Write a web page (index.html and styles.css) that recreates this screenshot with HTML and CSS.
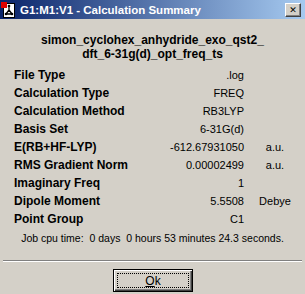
FILE: index.html
```html
<!DOCTYPE html>
<html lang="en">
<head>
  <meta charset="UTF-8" />
  <title>G1:M1:V1 - Calculation Summary</title>
  <link rel="stylesheet" href="styles.css">
</head>
<body>
  <div class="window">
    <!-- title bar -->
    <div class="titlebar">
      <svg class="app-icon" width="16" height="16" viewBox="0 0 16 16">
        <rect x="2.5" y="1.5" width="11" height="14" fill="#fff" stroke="#000"/>
        <rect x="0" y="0" width="6" height="6" fill="#e00000"/>
        <path d="M8 4 L8 8 L5 12 M8 8 L11 12 M5 12 L11 12" stroke="#000" stroke-width="1.3" fill="none"/>
        <circle cx="8" cy="4" r="1.3" fill="#000"/>
        <circle cx="5" cy="12" r="1.3" fill="#000"/>
        <circle cx="11" cy="12" r="1.3" fill="#000"/>
      </svg>
      <span class="title">G1:M1:V1 - Calculation Summary</span>
      <button class="close-btn">&#x2715;</button>
    </div>

    <!-- file name -->
    <div class="filename">
      <div>simon_cyclohex_anhydride_exo_qst2_</div>
      <div>dft_6-31g(d)_opt_freq_ts</div>
    </div>

    <!-- summary rows -->
    <div class="summary">
      <span class="label">File Type</span><span class="value">.log</span><span class="unit"></span>
      <span class="label">Calculation Type</span><span class="value">FREQ</span><span class="unit"></span>
      <span class="label">Calculation Method</span><span class="value">RB3LYP</span><span class="unit"></span>
      <span class="label">Basis Set</span><span class="value">6-31G(d)</span><span class="unit"></span>
      <span class="label">E(RB+HF-LYP)</span><span class="value">-612.67931050</span><span class="unit">a.u.</span>
      <span class="label">RMS Gradient Norm</span><span class="value">0.00002499</span><span class="unit">a.u.</span>
      <span class="label">Imaginary Freq</span><span class="value">1</span><span class="unit"></span>
      <span class="label">Dipole Moment</span><span class="value">5.5508</span><span class="unit">Debye</span>
      <span class="label">Point Group</span><span class="value">C1</span><span class="unit"></span>
    </div>

    <div class="cputime">Job cpu time:&nbsp; 0 days&nbsp; 0 hours 53 minutes 24.3 seconds.</div>

    <div class="separator"></div>

    <div class="buttons">
      <button class="ok-btn"><span class="focus"><u>O</u>k</span></button>
    </div>
  </div>
</body>
</html>
```

FILE: styles.css
```css
* {
  margin: 0;
  padding: 0;
  box-sizing: border-box;
}

body {
  font-family: 'Liberation Sans', Arial, sans-serif;
  font-size: 11px;
  color: #000;
  background-color: #d4d0c8;
  width: 305px;
  height: 294px;
  overflow: hidden;
}

.window {
  display: flex;
  flex-direction: column;
}

/* title bar */
.titlebar {
  height: 19px;
  display: flex;
  align-items: center;
  padding: 0 4px 0 1px;
  background: linear-gradient(to right, #0a246a, #a6caf0);
  color: white;
}

.app-icon {
  flex: none;
  margin-right: 3px;
}

.title {
  flex: 1;
  font-weight: bold;
  font-size: 11.5px;
  white-space: nowrap;
}

.close-btn {
  width: 16px;
  height: 14px;
  background-color: #d4d0c8;
  border: 1px solid;
  border-color: #fff #404040 #404040 #fff;
  box-shadow: inset -1px -1px 0 #808080;
  font-family: 'DejaVu Sans', sans-serif;
  font-size: 9px;
  font-weight: bold;
  line-height: 12px;
  color: #000;
  text-align: center;
}

/* file name */
.filename {
  margin-top: 14px;
  text-align: center;
  font-weight: bold;
  font-size: 12px;
  line-height: 14px;
}

/* summary rows */
.summary {
  margin-top: 5px;
  padding: 0 3px 0 14px;
  display: grid;
  grid-template-columns: 1fr 100px 54px;
  column-gap: 4px;
  grid-auto-rows: 18px;
  align-items: center;
}

.label {
  font-weight: bold;
  font-size: 12px;
  white-space: nowrap;
}

.value {
  text-align: right;
  white-space: nowrap;
}

.unit {
  text-align: center;
}

.cputime {
  margin-top: 1px;
  text-align: center;
  line-height: 18px;
  font-size: 10.5px;
}

.separator {
  margin: 13px 3px 0 3px;
  height: 2px;
  border-top: 1px solid #808080;
  border-bottom: 1px solid #fff;
}

.buttons {
  display: flex;
  justify-content: center;
  padding-top: 7px;
}

.ok-btn {
  width: 80px;
  height: 23px;
  margin-left: 1px;
  background-color: #d4d0c8;
  border: 1px solid #000;
  box-shadow: inset 1px 1px 0 #fff, inset -1px -1px 0 #404040, inset -2px -2px 0 #808080;
  font-family: 'Liberation Sans', Arial, sans-serif;
  font-size: 12px;
  padding: 3px;
  display: flex;
}

.focus {
  flex: 1;
  border: 1px dotted #000;
  display: flex;
  align-items: center;
  justify-content: center;
}
```
